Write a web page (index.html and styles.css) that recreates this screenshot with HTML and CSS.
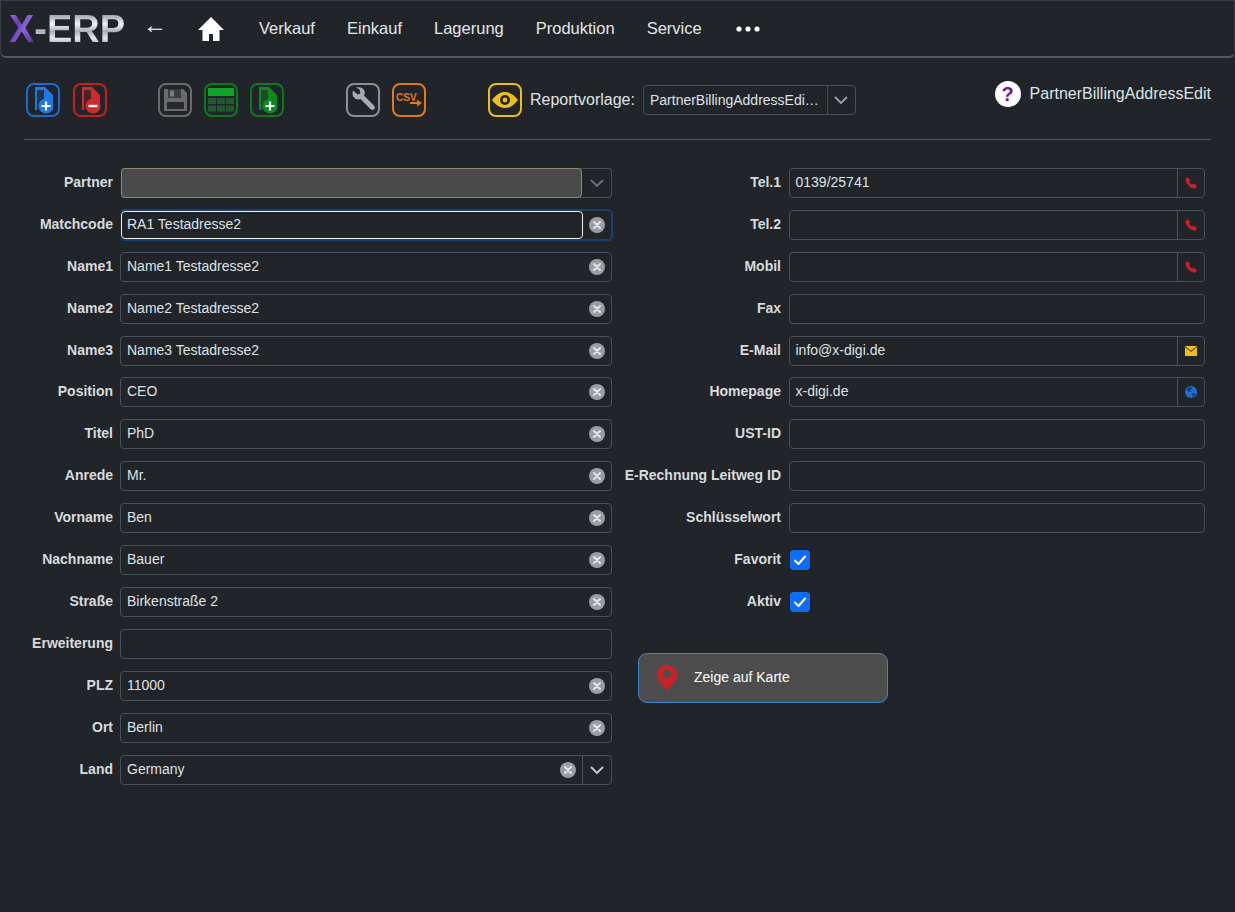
FILE: index.html
```html
<!DOCTYPE html>
<html lang="de">
<head>
<meta charset="utf-8">
<title>PartnerBillingAddressEdit</title>
<link rel="stylesheet" href="styles.css">
</head>
<body>
<svg class="defs" width="0" height="0" aria-hidden="true">
  <symbol id="x" viewBox="0 0 16 16"><circle cx="8" cy="8" r="8" fill="#9a9da2"/><path d="M5 5l6 6M11 5l-6 6" stroke="#e4e5e7" stroke-width="2" stroke-linecap="round"/></symbol>
  <symbol id="chev" viewBox="0 0 16 16"><path d="M2 5l6 6 6-6" fill="none" stroke="currentColor" stroke-width="1.8"/></symbol>
  <symbol id="phone" viewBox="0 0 12 12"><path d="M3 .6L.9 1.800C.2 5.800 5 11.600 10.400 11.400L11.600 9 8.600 6.700 7.100 8C5.600 7.300 4.400 6 3.900 4.500L5.100 3.400z" fill="#c8232a" stroke="#c8232a" stroke-width=".5" stroke-linejoin="round"/></symbol>
</svg>

<header class="nav">
  <div class="logo"><span class="logo-x">X</span><span class="logo-rest">-ERP</span></div>
  <span class="back">←</span>
  <svg class="home" viewBox="0 0 26 24"><path d="M13 0L0 13h4.500v11H11v-7h4v7h6.500V13H26z" fill="#fff"/></svg>
  <nav class="menu">
    <a>Verkauf</a><a>Einkauf</a><a>Lagerung</a><a>Produktion</a><a>Service</a>
    <svg class="dots" viewBox="0 0 24 6"><circle cx="3" cy="3" r="2.600" fill="#fff"/><circle cx="12" cy="3" r="2.600" fill="#fff"/><circle cx="21" cy="3" r="2.600" fill="#fff"/></svg>
  </nav>
</header>

<section class="toolbar">
  <svg class="tool tool-first" viewBox="0 0 34 34"><rect x="1" y="1" width="32" height="32" rx="7" fill="none" stroke="#1a6ad0" stroke-width="2"/><path d="M9 4h10l8 8v15H9z" fill="#1f78e6"/><path d="M11 7h7v20h-7z" fill="#22344f"/><circle cx="20" cy="23" r="7.500" fill="#1f78e6"/><path d="M20 18.500v9M15.500 23h9" stroke="#fff" stroke-width="2.200"/></svg>
  <svg class="tool" viewBox="0 0 34 34"><rect x="1" y="1" width="32" height="32" rx="7" fill="none" stroke="#c3201f" stroke-width="2"/><path d="M9 4h10l8 8v15H9z" fill="#d12a2a"/><path d="M11 7h7v20h-7z" fill="#4a2326"/><circle cx="20" cy="23" r="7.500" fill="#d12a2a"/><path d="M15.500 23h9" stroke="#fff" stroke-width="2.400"/></svg>
  <svg class="tool gap-save" viewBox="0 0 34 34"><rect x="1" y="1" width="32" height="32" rx="7" fill="none" stroke="#6b6b6b" stroke-width="2"/><path d="M6 6h19l4 4v18H6z" fill="#6b6b6b"/><path d="M10 6h13v9H10z" fill="#3a3c40"/><path d="M12 7.500h4v6h-4z" fill="#7b7b7b"/><path d="M9 19h17v7H9z" fill="#26292d"/></svg>
  <svg class="tool" viewBox="0 0 34 34"><rect x="1" y="1" width="32" height="32" rx="7" fill="none" stroke="#0c7a1c" stroke-width="2"/><path d="M4 5h26v8H4z" fill="#0fa32a"/><path d="M4 15h8v6H4zM13 15h8v6h-8zM22 15h8v6h-8zM4 22.500h8v6H4zM13 22.500h8v6h-8zM22 22.500h8v6h-8z" fill="#1f5a33"/></svg>
  <svg class="tool" viewBox="0 0 34 34"><rect x="1" y="1" width="32" height="32" rx="7" fill="none" stroke="#0c7a1c" stroke-width="2"/><path d="M9 4h10l8 8v15H9z" fill="#0c8a22"/><path d="M11 7h7v20h-7z" fill="#1c4a2a"/><circle cx="20" cy="23" r="7.500" fill="#0c8a22"/><path d="M20 18.500v9M15.500 23h9" stroke="#fff" stroke-width="2.200"/></svg>
  <svg class="tool gap-wrench" viewBox="0 0 34 34"><rect x="1" y="1" width="32" height="32" rx="7" fill="none" stroke="#8b8e93" stroke-width="2"/><path d="M7 7.500l4.500 4 3-1-1-4L10 4.500c3.500-1 7 0 8.300 3 .7 1.700.5 3.500-.3 5l10 10c1.200 1.200 1.200 2.700.2 3.800s-2.700 1-3.800-.2L14.500 16c-2 .8-4.300.5-6-1-2-1.800-2.500-4.700-1.500-7.500z" fill="#a8abaf"/></svg>
  <svg class="tool" viewBox="0 0 34 34"><rect x="1" y="1" width="32" height="32" rx="7" fill="none" stroke="#e07a16" stroke-width="2"/><text x="4" y="18" class="csv">CSV</text><path d="M18 19h7v-2.500l5 3.500-5 3.500V21h-7z" fill="#e07a16"/></svg>
  <svg class="tool gap-eye" viewBox="0 0 34 34"><rect x="1" y="1" width="32" height="32" rx="7" fill="none" stroke="#eabf16" stroke-width="2"/><path d="M4 17c4-5.500 8.500-8 13-8s9 2.500 13 8c-4 5.500-8.500 8-13 8s-9-2.500-13-8z" fill="#eabf16"/><circle cx="17" cy="17" r="5" fill="#22252a"/><circle cx="17" cy="17" r="2.400" fill="#eabf16"/></svg>
  <span class="report-label">Reportvorlage:</span>
  <div class="report-select"><span class="report-value">PartnerBillingAddressEdi…</span><span class="report-chev"><svg class="chev-icon"><use href="#chev"/></svg></span></div>
  <div class="help"><span class="help-mark">?</span><span class="help-text">PartnerBillingAddressEdit</span></div>
</section>

<hr class="rule">

<main class="form">
  <div class="col col-left">
    <div class="row"><label>Partner</label><div class="group group-disabled"><div class="field field-disabled"></div><span class="addon addon-chev dim"><svg class="chev-icon"><use href="#chev"/></svg></span></div></div>
    <div class="row"><label>Matchcode</label><div class="group group-focus"><div class="field field-focus">RA1 Testadresse2</div><span class="clear-cell"><svg class="clear"><use href="#x"/></svg></span></div></div>
    <div class="row"><label>Name1</label><div class="group"><div class="field">Name1 Testadresse2</div><svg class="clear"><use href="#x"/></svg></div></div>
    <div class="row"><label>Name2</label><div class="group"><div class="field">Name2 Testadresse2</div><svg class="clear"><use href="#x"/></svg></div></div>
    <div class="row"><label>Name3</label><div class="group"><div class="field">Name3 Testadresse2</div><svg class="clear"><use href="#x"/></svg></div></div>
    <div class="row"><label>Position</label><div class="group"><div class="field">CEO</div><svg class="clear"><use href="#x"/></svg></div></div>
    <div class="row"><label>Titel</label><div class="group"><div class="field">PhD</div><svg class="clear"><use href="#x"/></svg></div></div>
    <div class="row"><label>Anrede</label><div class="group"><div class="field">Mr.</div><svg class="clear"><use href="#x"/></svg></div></div>
    <div class="row"><label>Vorname</label><div class="group"><div class="field">Ben</div><svg class="clear"><use href="#x"/></svg></div></div>
    <div class="row"><label>Nachname</label><div class="group"><div class="field">Bauer</div><svg class="clear"><use href="#x"/></svg></div></div>
    <div class="row"><label>Straße</label><div class="group"><div class="field">Birkenstraße 2</div><svg class="clear"><use href="#x"/></svg></div></div>
    <div class="row"><label>Erweiterung</label><div class="group"><div class="field"></div></div></div>
    <div class="row"><label>PLZ</label><div class="group"><div class="field">11000</div><svg class="clear"><use href="#x"/></svg></div></div>
    <div class="row"><label>Ort</label><div class="group"><div class="field">Berlin</div><svg class="clear"><use href="#x"/></svg></div></div>
    <div class="row"><label>Land</label><div class="group"><div class="field">Germany</div><svg class="clear"><use href="#x"/></svg><span class="addon addon-chev"><svg class="chev-icon"><use href="#chev"/></svg></span></div></div>
  </div>
  <div class="col col-right">
    <div class="row"><label>Tel.1</label><div class="group"><div class="field">0139/25741</div><span class="addon"><svg class="add-icon"><use href="#phone"/></svg></span></div></div>
    <div class="row"><label>Tel.2</label><div class="group"><div class="field"></div><span class="addon"><svg class="add-icon"><use href="#phone"/></svg></span></div></div>
    <div class="row"><label>Mobil</label><div class="group"><div class="field"></div><span class="addon"><svg class="add-icon"><use href="#phone"/></svg></span></div></div>
    <div class="row"><label>Fax</label><div class="group"><div class="field"></div></div></div>
    <div class="row"><label>E-Mail</label><div class="group"><div class="field">info@x-digi.de</div><span class="addon"><svg class="add-icon" viewBox="0 0 12 10"><path d="M0 0h12v10H0z" fill="#f2bd1d"/><path d="M0 .8l6 4.400L12 .8" fill="none" stroke="#7a5a10" stroke-width="1.200"/></svg></span></div></div>
    <div class="row"><label>Homepage</label><div class="group"><div class="field">x-digi.de</div><span class="addon"><svg class="add-icon" viewBox="0 0 12 12"><circle cx="6" cy="6" r="6" fill="#1c6fd0"/><path d="M3 2l3-1 1 2-2 1 1 2-2 0-2-2zM7 7l3 0 0 2-2 2-1-2z" fill="#123a6c"/></svg></span></div></div>
    <div class="row"><label>UST-ID</label><div class="group"><div class="field"></div></div></div>
    <div class="row"><label>E-Rechnung Leitweg ID</label><div class="group"><div class="field"></div></div></div>
    <div class="row"><label>Schlüsselwort</label><div class="group"><div class="field"></div></div></div>
    <div class="row"><label>Favorit</label><span class="check"><svg viewBox="0 0 20 20"><path d="M5 10.500l3.500 3.500L15 6.500" fill="none" stroke="#fff" stroke-width="2" stroke-linecap="round" stroke-linejoin="round"/></svg></span></div>
    <div class="row"><label>Aktiv</label><span class="check"><svg viewBox="0 0 20 20"><path d="M5 10.500l3.500 3.500L15 6.500" fill="none" stroke="#fff" stroke-width="2" stroke-linecap="round" stroke-linejoin="round"/></svg></span></div>
    <button class="map-btn" type="button"><svg class="pin" viewBox="0 0 20 26"><path fill-rule="evenodd" d="M10 0C4.500 0 0 4.300 0 9.800 0 15.500 6 21 10 26c4-5 10-10.500 10-16.200C20 4.300 15.500 0 10 0zM10 5a4 4 0 1 0 0 8 4 4 0 0 0 0-8z" fill="#c8232a"/></svg><span class="map-label">Zeige auf Karte</span></button>
  </div>
</main>
</body>
</html>
```

FILE: styles.css
```css
* { box-sizing: border-box; }
html, body { margin: 0; height: 100%; }
body {
  background: #212529;
  color: #dee2e6;
  font-family: "Liberation Sans", Arial, sans-serif;
  font-size: 14px;
  overflow: hidden;
}
.defs { position: absolute; }

/* top bar */
.nav {
  display: flex;
  align-items: center;
  height: 58px;
  padding-left: 9px;
  border: 1px solid #3a3e44;
  border-bottom: 2px solid #54585e;
  border-radius: 0 0 6px 6px;
}
.logo {
  font-size: 38px;
  font-weight: 700;
  line-height: 44px;
  width: 116px;
  margin-left: -1px;
  white-space: nowrap;
}
.logo-x {
  background: linear-gradient(115deg, #a988dd 0%, #6a3ab8 35%, #8f62d6 55%, #4c2590 100%);
  -webkit-background-clip: text;
  background-clip: text;
  color: transparent;
}
.logo-rest {
  background: linear-gradient(180deg, #8d949c 12%, #f1f3f5 38%, #aab0b7 56%, #e6e8eb 72%, #9ca2a9 90%);
  -webkit-background-clip: text;
  background-clip: text;
  color: transparent;
}
.back {
  margin: -8px 0 0 18px;
  width: 22px;
  color: #fff;
  font-size: 24px;
  line-height: 24px;
}
.home { width: 26px; height: 24px; margin-left: 33px; }
.menu { display: flex; align-items: center; gap: 32px; margin-left: 35px; }
.menu a { color: #e4e6e9; font-size: 16.500px; line-height: 24px; padding-bottom: 2px; }
.dots { width: 24px; height: 6px; margin-left: 2px; }

/* toolbar */
.toolbar {
  display: flex;
  align-items: center;
  height: 81px;
  padding: 2px 24px 0 26px;
}
.tool { width: 34px; height: 34px; flex: none; margin-right: 12px; }
.tool.tool-first { margin-right: 13px; }
.tool.gap-save { margin-left: 39px; }
.tool.gap-wrench { margin-left: 50px; }
.tool.gap-eye { margin-left: 50px; margin-right: 8px; }
.csv { font: 700 10px "Liberation Sans", Arial, sans-serif; fill: #e07a16; }
.report-label { font-size: 16px; color: #dee2e6; margin-right: 8px; }
.report-select {
  display: flex;
  align-items: stretch;
  width: 213px;
  height: 30px;
  border: 1px solid #495057;
  border-radius: 4px;
}
.report-value { flex: 1; padding-left: 6px; line-height: 28px; color: #dee2e6; white-space: nowrap; overflow: hidden; }
.report-chev { width: 28px; flex: none; display: flex; align-items: center; justify-content: center; border-left: 1px solid #495057; color: #9ea2a7; }
.chev-icon { width: 16px; height: 16px; }
.help { display: flex; align-items: center; gap: 9px; margin-left: auto; position: relative; top: -6px; }
.help-mark {
  width: 26px;
  height: 26px;
  border-radius: 50%;
  background: #fff;
  color: #7a1590;
  font-weight: 700;
  font-size: 20px;
  line-height: 26px;
  text-align: center;
}
.help-text { font-size: 16px; color: #dee2e6; }

.rule { margin: 0 24px; border: 0; border-top: 1px solid #54585e; }

/* form */
.form { display: flex; padding-top: 27.800px; }
.col { display: flex; flex-direction: column; gap: 11.940px; }
.col-left { width: 612px; }
.col-right { width: 593px; }
.row { display: flex; align-items: center; height: 30px; flex: none; }
.row label { font-weight: 700; color: #d7dadd; text-align: right; white-space: nowrap; padding-bottom: 2px; }
.col-left label { width: 113px; margin-right: 7px; }
.col-right label { width: 169px; margin-right: 8px; }
.group {
  flex: 1;
  display: flex;
  align-items: center;
  height: 30px;
  border: 1px solid #495057;
  border-radius: 4px;
}
.field {
  flex: 1;
  height: 28px;
  padding-left: 6px;
  line-height: 26px;
  color: #dee2e6;
}
.col-right .field { padding-left: 5.500px; }
.clear { width: 16px; height: 16px; flex: none; margin-right: 6px; }
.addon {
  width: 27px;
  height: 28px;
  flex: none;
  display: flex;
  align-items: center;
  justify-content: center;
  border-left: 1px solid #495057;
}
.addon-chev { width: 29px; color: #c9ccd0; }
.addon-chev.dim { color: #6f7378; border-left: 0; }
.add-icon { width: 12px; height: 12px; }
.group-disabled { border-left-color: transparent; }
.field-disabled {
  height: 30px;
  margin: -1px 0;
  background: #4a4a4a;
  border: 1px solid #8a8a78;
  border-radius: 4px;
}
.group-focus { border: 1px solid #1c3f72; border-left-color: transparent; box-shadow: 1px 0 0 #1c3f72, 0 1px 0 #1c3f72, 0 -1px 0 #1c3f72; }
.field-focus {
  padding-left: 5px;
  background: #212529;
  border: 1px solid #f3f3ee;
  border-radius: 4px;
  line-height: 24px;
}
.clear-cell { width: 28px; flex: none; display: flex; align-items: center; justify-content: center; }
.clear-cell .clear { margin: 0; }
.check {
  width: 20px;
  height: 20px;
  margin-left: 1px;
  background: #0d6efd;
  border-radius: 4px;
  display: block;
}
.check svg { display: block; width: 20px; height: 20px; }
.map-btn {
  align-self: flex-start;
  display: flex;
  align-items: center;
  width: 250px;
  height: 50px;
  margin: 24px 0 0 26px;
  padding: 0 0 0 18px;
  background: #4d4d4d;
  border: 1px solid #3f86cc;
  border-radius: 9px;
  color: #fff;
  font: 14px "Liberation Sans", Arial, sans-serif;
}
.pin { width: 20px; height: 26px; margin-right: 17px; flex: none; }
.map-label { padding-bottom: 2px; }
```
